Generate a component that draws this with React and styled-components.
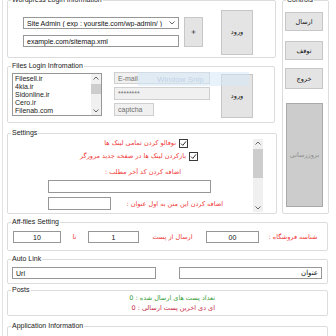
import React from 'react'
import styled, { createGlobalStyle } from 'styled-components'

const FONT = `"Liberation Sans", "DejaVu Sans", sans-serif`
const FA = `"DejaVu Sans", "Liberation Sans", sans-serif`

const Global = createGlobalStyle`
  html, body { margin: 0; padding: 0; background: #fff; }
  body { font-family: ${FONT}; font-size: 7px; color: #000; }
  * { box-sizing: border-box; }
`

const Window = styled.div`
  width: 336px;
  height: 336px;
  overflow: hidden;
  background: #fff;
  padding-left: 2px;
`

const Frame = styled.div`
  height: 100%;
  border-left: 1px solid #e2e2e2;
  padding-left: 4px;
  display: flex;
  flex-direction: column;
`

const TopRow = styled.div`
  display: flex;
  align-items: flex-start;
  flex-shrink: 0;
`

const LeftCol = styled.div`
  width: 270px;
  display: flex;
  flex-direction: column;
`

const Group = styled.div`
  position: relative;
  flex-shrink: 0;
  width: ${p => p.$w}px;
  height: ${p => p.$h}px;
  margin-top: ${p => p.$mt || 0}px;
  margin-left: ${p => p.$ml || 0}px;
  border: 1px solid #dcdcdc;
  border-radius: 2px;
`

const GroupLabel = styled.span`
  position: absolute;
  top: -5px;
  left: 3px;
  padding: 0 1px;
  background: #fff;
  line-height: 8px;
  font-size: 7px;
  color: #1a1a1a;
  white-space: nowrap;
`

const Btn = styled.div`
  flex-shrink: 0;
  width: ${p => p.$w}px;
  height: ${p => p.$h}px;
  margin-top: ${p => p.$mt || 0}px;
  margin-left: ${p => p.$ml || 0}px;
  background: ${p => (p.$disabled ? '#cccccc' : '#e4e4e4')};
  border: 1px solid ${p => (p.$disabled ? '#a9a9a9' : '#c6c6c6')};
  color: ${p => (p.$disabled ? '#8d8d8d' : '#111')};
  display: flex;
  align-items: center;
  justify-content: center;
  font-family: ${FA};
  font-size: 6.5px;
  direction: rtl;
`

const Box = styled.div`
  flex-shrink: 0;
  width: ${p => (p.$w ? `${p.$w}px` : 'auto')};
  height: ${p => p.$h || 12}px;
  margin-top: ${p => p.$mt || 0}px;
  border: 1px solid ${p => (p.$dim ? '#cfcfcf' : '#979797')};
  background: ${p => (p.$dim ? '#f0f0f0' : '#fff')};
  color: ${p => (p.$dim ? '#707070' : '#111')};
  display: flex;
  align-items: center;
  justify-content: ${p => p.$align || 'flex-start'};
  padding: 0 3px;
  font-size: 7px;
  white-space: nowrap;
  overflow: hidden;
  direction: ${p => (p.$rtl ? 'rtl' : 'ltr')};
  font-family: ${p => (p.$rtl ? FA : FONT)};
`

/* ---------- wordpress login ---------- */
const WpRow = styled.div`
  display: flex;
  align-items: center;
  height: 100%;
  padding: 8px 0 2px 15px;
`

const FieldCol = styled.div`
  display: flex;
  flex-direction: column;
  width: ${p => p.$w}px;
  margin-left: ${p => p.$ml || 0}px;
  gap: ${p => p.$gap || 0}px;
`

const ComboText = styled.span`
  flex: 1;
  overflow: hidden;
`

/* ---------- files login ---------- */
const FilesRow = styled.div`
  display: flex;
  align-items: flex-start;
  padding: 5px 0 0 4px;
`

const ListBox = styled.div`
  margin-top: 1px;
  width: 90px;
  height: 43px;
  border: 1px solid #979797;
  display: flex;
  background: #fff;
`

const ListItems = styled.div`
  flex: 1;
  padding: 1px 0 0 2px;
  line-height: 8.1px;
  font-size: 7px;
  color: #222;
`

const Scroll = styled.div`
  width: ${p => p.$w || 10}px;
  height: ${p => (p.$h ? `${p.$h}px` : '100%')};
  margin-top: ${p => p.$mt || 0}px;
  background: #f0f0f0;
  display: flex;
  flex-direction: column;
  align-items: center;
  justify-content: space-between;
  padding: 2px 0;
  flex-shrink: 0;
`

const Thumb = styled.div`
  width: 100%;
  height: ${p => p.$h}px;
  margin-top: ${p => p.$top}px;
  background: #cdcdcd;
  margin-bottom: auto;
`

const Snip = styled.div`
  position: absolute;
  left: 130px;
  top: 5px;
  width: 111px;
  height: 14px;
  background: rgba(214, 232, 247, 0.55);
  color: rgba(190, 208, 228, 0.95);
  font-size: 8px;
  display: flex;
  align-items: center;
  padding-left: 19px;
`

/* ---------- settings ---------- */
const SettingsBody = styled.div`
  display: flex;
  padding: 4px 13px 0 4px;
`

const SettingsContent = styled.div`
  flex: 1;
  display: flex;
  flex-direction: column;
`

const SRow = styled.div`
  display: flex;
  align-items: center;
  direction: rtl;
  height: ${p => p.$h || 10}px;
  margin-top: ${p => p.$mt || 0}px;
  padding-right: ${p => p.$pr || 0}px;
  padding-left: ${p => p.$pl || 0}px;
  gap: 3px;
  justify-content: ${p => p.$justify || 'flex-start'};
`

const RedText = styled.span`
  font-family: ${FA};
  font-size: 6.5px;
  color: ${p => p.$color || '#f03a3a'};
  direction: rtl;
  white-space: nowrap;
`

const Check = styled.span`
  width: 9px;
  height: 9px;
  border: 1px solid #3a3a3a;
  background: #fff;
  display: flex;
  align-items: center;
  justify-content: center;
  flex-shrink: 0;
`

/* ---------- controls ---------- */
const ControlsCol = styled.div`
  display: flex;
  flex-direction: column;
  padding: 11px 0 0 2px;
`

/* ---------- bottom groups ---------- */
const AffGrid = styled.div`
  display: grid;
  grid-template-columns: 48px 27px 51px 67px 53px 1fr;
  align-items: center;
  padding: 8px 0 0 5px;
`

const Centered = styled.div`
  display: flex;
  justify-content: center;
  height: 12px;
  align-items: center;
`

const AutoRow = styled.div`
  display: flex;
  padding: 7px 0 0 4px;
  gap: 23px;
`

const PostLines = styled.div`
  display: flex;
  flex-direction: column;
  align-items: flex-end;
  padding: 2px 112px 0 0;
  line-height: 10px;
`

const Chevron = ({ up }) => (
  <svg width="6" height="4" viewBox="0 0 6 4">
    <path
      d={up ? 'M0.5 3.5 L3 1 L5.5 3.5' : 'M0.5 0.5 L3 3 L5.5 0.5'}
      fill="none"
      stroke="#555"
      strokeWidth="0.9"
    />
  </svg>
)

const Tick = () => (
  <svg width="7" height="7" viewBox="0 0 7 7">
    <path d="M1 3.6 L2.8 5.4 L6 1.4" fill="none" stroke="#333" strokeWidth="1" />
  </svg>
)

const sites = ['Filesell.ir', '4kia.ir', 'Sidonline.ir', 'Cero.ir', 'Filenab.com']

const App = () => {
  return (
    <Window>
      <Global />
      <Frame>
        <TopRow>
          <LeftCol>
            <Group $w={269} $h={58}>
              <GroupLabel>Wordpress Login Information</GroupLabel>
              <WpRow>
                <FieldCol $w={156} $gap={6}>
                  <Box>
                    <ComboText>Site Admin ( exp : yoursite.com/wp-admin/ )</ComboText>
                    <Chevron />
                  </Box>
                  <Box>example.com/sitemap.xml</Box>
                </FieldCol>
                <Btn $w={19} $h={30} $ml={5}>+</Btn>
                <Btn $w={32} $h={45} $ml={18}>ورود</Btn>
              </WpRow>
            </Group>

            <Group $w={268} $h={57} $mt={8}>
              <GroupLabel>Files Login Infromation</GroupLabel>
              <FilesRow>
                <ListBox>
                  <ListItems>
                    {sites.map(s => (
                      <div key={s}>{s}</div>
                    ))}
                  </ListItems>
                  <Scroll>
                    <Chevron up />
                    <Thumb $h={10} $top={4} />
                    <Chevron />
                  </Scroll>
                </ListBox>
                <FieldCol $w={96} $ml={12}>
                  <Box $dim $h={12}>E-mail</Box>
                  <Box $dim $h={13} $mt={3}>********</Box>
                  <Box $dim $h={13} $mt={3} $w={40}>captcha</Box>
                </FieldCol>
                <Btn $w={32} $h={44} $ml={11} $mt={2}>ورود</Btn>
              </FilesRow>
              <Snip>Window Snip</Snip>
            </Group>

            <Group $w={270} $h={81} $mt={10}>
              <GroupLabel>Settings</GroupLabel>
              <SettingsBody>
                <SettingsContent>
                  <SRow $pr={65}>
                    <Check><Tick /></Check>
                    <RedText>نوفالو کردن تمامی لینک ها</RedText>
                  </SRow>
                  <SRow $pr={55} $mt={3}>
                    <Check><Tick /></Check>
                    <RedText>بازکردن لینک ها در صفحه جدید مرورگر</RedText>
                  </SRow>
                  <SRow $pr={72} $mt={6}>
                    <RedText>اضافه کردن کد آخر مطلب :</RedText>
                  </SRow>
                  <SRow $pr={42} $mt={3} $h={13}>
                    <Box $w={163} $h={13} />
                  </SRow>
                  <SRow $pr={30} $pl={36} $mt={4} $h={13} $justify="space-between">
                    <RedText>اضافه کردن این متن به اول عنوان :</RedText>
                    <Box $w={63} $h={13} />
                  </SRow>
                </SettingsContent>
                <Scroll $h={73} $mt={1}>
                  <Chevron up />
                  <Thumb $h={29} $top={4} />
                  <Chevron />
                </Scroll>
              </SettingsBody>
            </Group>
          </LeftCol>

          <Group $w={47} $h={214} $ml={5}>
            <GroupLabel>Controls</GroupLabel>
            <ControlsCol>
              <Btn $w={38} $h={19}>ارسال</Btn>
              <Btn $w={38} $h={19} $mt={10}>توقف</Btn>
              <Btn $w={38} $h={21} $mt={8}>خروج</Btn>
              <Btn $w={37} $h={104} $mt={14} $ml={1} $disabled>بروزرسانی</Btn>
            </ControlsCol>
          </Group>
        </TopRow>

        <Group $w={321} $h={29} $mt={8}>
          <GroupLabel>Aff-files Setting</GroupLabel>
          <AffGrid>
            <Box $align="center">10</Box>
            <Centered><RedText>تا</RedText></Centered>
            <Box $align="center">1</Box>
            <Centered><RedText>ارسال از پست</RedText></Centered>
            <Box $align="center">00</Box>
            <Centered><RedText>شناسه فروشگاه :</RedText></Centered>
          </AffGrid>
        </Group>

        <Group $w={321} $h={25} $mt={8}>
          <GroupLabel>Auto Link</GroupLabel>
          <AutoRow>
            <Box $w={144}>Url</Box>
            <Box $w={143} $rtl>عنوان</Box>
          </AutoRow>
        </Group>

        <Group $w={321} $h={26} $mt={6}>
          <GroupLabel>Posts</GroupLabel>
          <PostLines>
            <RedText $color="#3a9c3a">تعداد پست های ارسال شده : 0</RedText>
            <RedText $color="#c42a45">ای دی اخرین پست ارسالی : 0</RedText>
          </PostLines>
        </Group>

        <Group $w={321} $h={40} $mt={10}>
          <GroupLabel>Application Information</GroupLabel>
        </Group>
      </Frame>
    </Window>
  )
}

export default App
